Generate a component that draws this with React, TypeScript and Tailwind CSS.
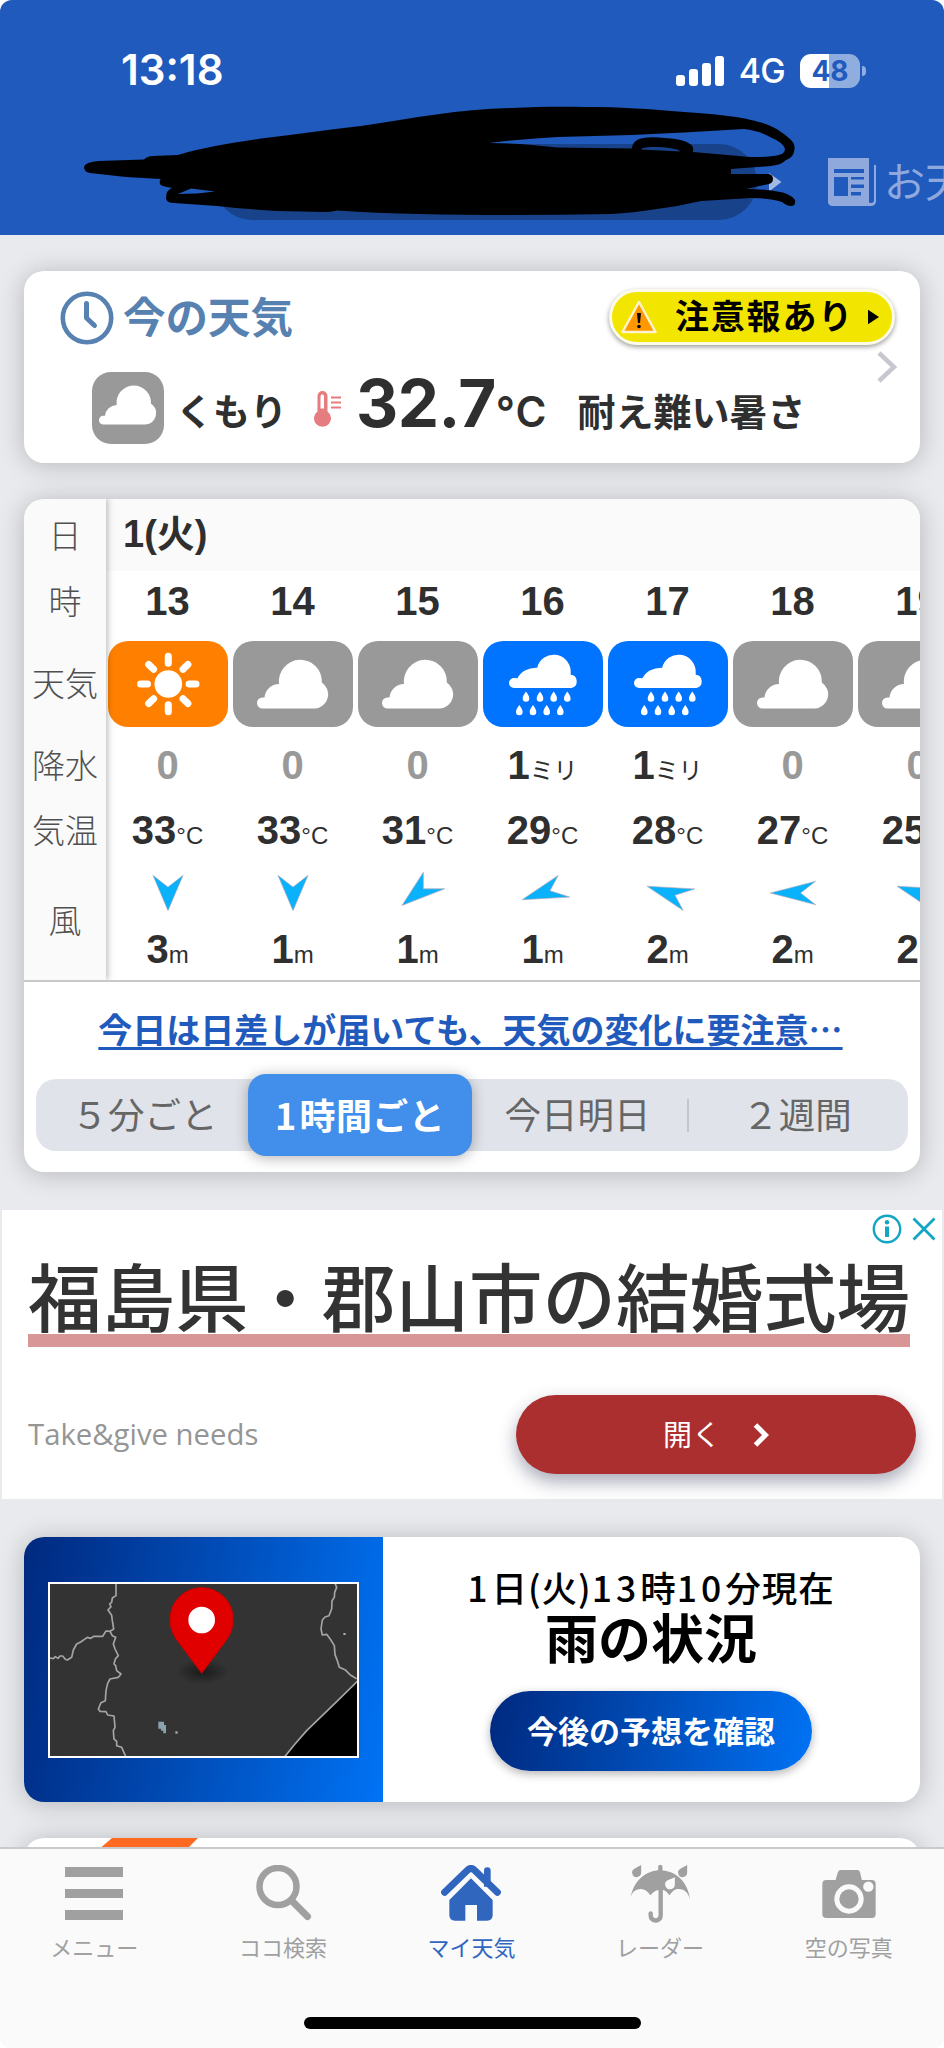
import type { ReactNode } from "react";

type Sky = "sun" | "cloud" | "rain";

type Hour = {
    hour: string;
    sky: Sky;
    rain: number;
    temp: number;
    windAngle: number;
    wind: number;
};

const hours: Hour[] = [
    { hour: "13", sky: "sun", rain: 0, temp: 33, windAngle: 0, wind: 3 },
    { hour: "14", sky: "cloud", rain: 0, temp: 33, windAngle: 0, wind: 1 },
    { hour: "15", sky: "cloud", rain: 0, temp: 31, windAngle: 45, wind: 1 },
    { hour: "16", sky: "rain", rain: 1, temp: 29, windAngle: 67.5, wind: 1 },
    { hour: "17", sky: "rain", rain: 1, temp: 28, windAngle: 112.5, wind: 2 },
    { hour: "18", sky: "cloud", rain: 0, temp: 27, windAngle: 90, wind: 2 },
    { hour: "19", sky: "cloud", rain: 0, temp: 25, windAngle: 112.5, wind: 2 },
];

const CLOUD = "M29.5 67.5A5.5 5.5 0 0 1 29.5 56.5H31.5A15 14.5 0 0 1 46 43A21.5 21.5 0 1 1 88.8 41.5A14.2 14.2 0 0 1 82 67.5Z";
const DROP = "M0 0C2 3 3.3 4.5 3.3 6.9A3.3 3.3 0 0 1 -3.3 6.9C-3.3 4.5 -2 3 0 0Z";

function SkyIcon({ sky }: { sky: Sky }) {
    if (sky === "sun") {
        return (
            <svg viewBox="0 0 120 86" className="block h-[86px] w-[120px] rounded-[20px] bg-[#ff8000]">
                <circle cx="60.3" cy="43" r="13.8" fill="#fff" />
                {[0, 45, 90, 135, 180, 225, 270, 315].map((a) => (
                    <path key={a} d="M60.3 22.2V15.3" stroke="#fff" strokeWidth="7" strokeLinecap="round" transform={`rotate(${a} 60.3 43)`} />
                ))}
            </svg>
        );
    }
    if (sky === "rain") {
        return (
            <svg viewBox="0 0 120 86" className="block h-[86px] w-[120px] rounded-[20px] bg-[#0073ff]">
                <g fill="#fff">
                    <path d="M31 47A5 5 0 0 1 31 37L34.5 37.3A20 17 0 0 1 54.2 26.7A17 17 0 0 1 87.7 29.8V33.8A6.7 6.7 0 0 1 88.5 47Z" />
                    {[43, 57, 70.7, 84.3].map((x) => (
                        <path key={x} d={DROP} transform={`translate(${x} 50.5)`} />
                    ))}
                    {[36.3, 50, 63.7, 77.3].map((x) => (
                        <path key={x} d={DROP} transform={`translate(${x} 64)`} />
                    ))}
                </g>
            </svg>
        );
    }
    return (
        <svg viewBox="0 0 120 86" className="block h-[86px] w-[120px] rounded-[20px] bg-[#999]">
            <path d={CLOUD} fill="#fff" />
        </svg>
    );
}

function WindArrow({ angle }: { angle: number }) {
    return (
        <svg viewBox="-30 -25 60 50" className="block h-[50px] w-[60px]">
            <path d="M0 20L-13.3 -20L0 -6.7L13.3 -20Z" fill="#0ab1fb" stroke="#b9a9b4" strokeWidth="0.6" transform={`scale(1.134 .882) rotate(${angle})`} />
        </svg>
    );
}

function Header() {
    return (
        <header className="relative h-[235px] shrink-0 bg-[#1f5abc]">
            {/* Status bar */}
            <div className="flex h-[106px] items-end justify-between pr-[78px] pb-[17px] pl-[121px] font-['Inter',sans-serif] text-white">
                <span className="text-[42px] leading-[38px] font-semibold">13:18</span>
                <div className="flex items-center">
                    <div className="mr-[15px] flex h-[30px] items-end gap-[4.6px]">
                        <span className="h-[11px] w-[8.5px] rounded-[3px] bg-white" />
                        <span className="h-[17px] w-[8.5px] rounded-[3px] bg-white" />
                        <span className="h-[23px] w-[8.5px] rounded-[3px] bg-white" />
                        <span className="h-[30px] w-[8.5px] rounded-[3px] bg-white" />
                    </div>
                    <span className="mr-[15px] text-[34px] leading-[36px] font-medium tracking-[-0.8px]">4G</span>
                    <span className="flex h-[34px] w-[60px] items-center justify-center rounded-[11px] bg-linear-to-r from-white from-[48%] to-[#8fadde] to-[48%] text-[28px] leading-none font-bold text-[#1f5abc]">48</span>
                    <span className="ml-[2px] h-[10px] w-[4px] rounded-r-full bg-[#8fadde]" />
                </div>
            </div>

            {/* Location tabs, partly covered by the pen stroke */}
            <svg viewBox="0 0 944 235" className="absolute inset-0 h-full w-full">
                <rect x="214" y="144" width="543" height="76" rx="38" fill="#184289" />
                <path d="M769 173L781.500 182L769 191.500Z" fill="#a3b8e4" />
                <path
                    fill="#000"
                    fillRule="evenodd"
                    d="M84 167Q85 162 99 161L144 159.500Q147 156 153 156L178 155C205 147 232 143 265 138C300 134 325 130 361 126C415 118 460 109 512 108C535 107 560 106.500 584 107C620 107 650 109 684 112C712 114 735 116 751 120C765 123 774 127 781 132C791 139 795 143 794.500 148C794.500 155 791 158 786 160C782 164 777 165 771 166L731 169V174H769Q773 175 773 179Q773 183 769 184L746 189Q763 189 777 191.500Q790 193 795 200Q796 206 791 206Q787 206 782 202Q770 198 751 198L701 201Q680 206 657 209Q632 213 611 214Q560 215 507 215C450 215 390 214 337 210.500Q330 212 325 212L277 211Q245 209 217 206L174 203Q166 203 166 198Q166 190 172 188Q160 186 160 184Q159 180 161 179L126 177L90 173Q84 172 84 167ZM191 188.500L215 191.500Q198 194 178 194ZM489 143Q520 139 557 137Q595 136 631 135L684 132.500L744 129Q760 131 770 137Q784 143 785 149Q785 154 777 155.500Q760 158 744 156.500L693 152Q694 146 690 144Q684 139 665 138Q645 136 637 140Q632 143 632 148.500L557 147.500Q520 143 489 143ZM641 149.500Q642 146.500 655 147Q674 147 681 151.500Z"
                />
                <path
                    fill="#8fa9dd"
                    fillRule="evenodd"
                    d="M828 158H869V202Q869 203 871 203Q874 203 874 200V165H876V202Q875 206 871 206H832Q828 205 828 202ZM834 169V173H864V169ZM834 177V196H848V177ZM851 177V179.500H864V177ZM851 184.500V188H864V184.500ZM851 192V195.500H861V192Z"
                />
            </svg>
            <div className="absolute top-[152px] left-[884px] w-[60px] overflow-hidden text-[41px] leading-[54px] whitespace-nowrap text-[#8fa9dd]">お天気</div>
        </header>
    );
}

function NowCard() {
    return (
        <section className="relative mx-6 h-[192px] shrink-0 rounded-[20px] bg-white shadow-[0_2px_26px_rgba(0,0,0,0.22)]">
            <div className="flex h-[94px] items-center justify-between pr-[25px] pl-[36px]">
                <div className="flex items-center gap-[9px] text-[#5681b0]">
                    <svg viewBox="0 0 54 54" className="h-[54px] w-[54px]" fill="none" stroke="currentColor">
                        <circle cx="27" cy="27" r="24.2" strokeWidth="4.6" />
                        <path d="M26.5 12.5V27L34.5 34.5" strokeWidth="5" strokeLinecap="round" strokeLinejoin="round" />
                    </svg>
                    <h2 className="mb-[5px] text-[42.5px] leading-none font-bold">今の天気</h2>
                </div>
                <button className="mb-[3px] flex h-[56px] w-[286px] items-center rounded-full border-[3px] border-[#fdfbe8] bg-[#f2e600] pl-[8px] text-black shadow-[0_2px_5px_rgba(0,0,0,0.4)]">
                    <svg viewBox="0 0 38 36" className="mr-[17px] h-[36px] w-[38px]">
                        <path d="M19 3L35.5 33H2.5Z" fill="#ff9700" stroke="#fff3cf" strokeWidth="2.5" strokeLinejoin="round" />
                        <path d="M17 14H21L20 24H18Z" />
                        <circle cx="19" cy="27.5" r="1.8" />
                    </svg>
                    <span className="mb-[3px] text-[34px] leading-none font-bold tracking-[1.8px]">注意報あり</span>
                    <svg viewBox="0 0 12 16" className="ml-[14px] h-[16px] w-[11px]">
                        <path d="M0 0L12 8L0 16Z" />
                    </svg>
                </button>
            </div>
            <svg viewBox="0 0 22 32" className="absolute top-[80px] right-[22px] h-[32px] w-[22px]" fill="none" stroke="#c7c7cf" strokeWidth="4.5">
                <path d="M3 2L18 16L3 30" />
            </svg>
            <div className="flex h-[86px] items-end pl-[68px] text-[#2f2f2f]">
                <svg viewBox="0 0 72 72" className="mb-[7px] h-[72px] w-[72px] rounded-[19px] bg-[#999]">
                    <path d={CLOUD} fill="#fff" transform="translate(-12.3 -1.6) scale(.803)" />
                </svg>
                <span className="mb-[22px] ml-[12px] text-[37px] leading-none font-bold">くもり</span>
                <svg viewBox="0 0 27 37" className="mb-[23px] ml-[27px] h-[37px] w-[27px]" fill="#e57c80">
                    <path fillRule="evenodd" d="M3.5 5A5 5 0 0 1 13.5 5V20.500A8.500 8.500 0 1 1 3.5 20.500ZM6.500 5V17.500H10V5A1.800 1.800 0 0 0 6.500 5Z" />
                    <path d="M17 5.500H27V7.500H17ZM17 10.500H27V12.500H17ZM17 15.500H27V17.500H17Z" />
                </svg>
                <span className="mb-[14px] ml-[15px] font-['Inter',sans-serif] text-[65.5px] leading-[66px] font-bold tracking-[-0.5px]">32.7</span>
                <span className="mb-[18px] font-['Inter',sans-serif] text-[42px] leading-[42px] font-semibold tracking-[1px]">°C</span>
                <span className="mb-[22px] ml-[30px] text-[38px] leading-none font-bold">耐え難い暑さ</span>
            </div>
        </section>
    );
}

function HourColumn({ data }: { data: Hour }) {
    return (
        <div className="flex w-[125px] shrink-0 flex-col items-center font-['Liberation_Sans','Noto_Sans_CJK_JP',sans-serif] text-[#2f2f2f]">
            <div className="flex h-[64px] w-[120px] items-center justify-center pb-[2px] text-[40px] leading-none font-bold">{data.hour}</div>
            <div className="flex h-[100px] items-center">
                <SkyIcon sky={data.sky} />
            </div>
            {data.rain > 0 ? (
                <div className="flex h-[64px] items-baseline pt-[9px] leading-[44px]">
                    <span className="text-[40px] font-bold">{data.rain}</span>
                    <span className="text-[24px]">ミリ</span>
                </div>
            ) : (
                <div className="h-[64px] pt-[9px] text-[40px] leading-[44px] font-bold text-[#999]">0</div>
            )}
            <div className="flex h-[66px] items-baseline pt-[10px] leading-[44px]">
                <span className="text-[40px] font-bold">{data.temp}</span>
                <span className="text-[24px]">°C</span>
            </div>
            <div className="h-[55px] pt-[4px]">
                <WindArrow angle={data.windAngle} />
            </div>
            <div className="flex h-[61px] items-baseline pt-[8px] leading-[44px]">
                <span className="text-[40px] font-bold">{data.wind}</span>
                <span className="text-[24px]">m</span>
            </div>
        </div>
    );
}

function HourlyCard() {
    return (
        <section className="mx-6 mt-[36px] h-[673px] shrink-0 rounded-[20px] bg-white shadow-[0_2px_26px_rgba(0,0,0,0.22)]">
            <div className="flex h-[483px] overflow-hidden rounded-t-[20px] border-b-2 border-[#c8c8c8]">
                <div className="z-10 flex w-[82px] shrink-0 flex-col bg-[#fafafa] text-center text-[33px] font-light text-[#505050] shadow-[2px_0_6px_rgba(0,0,0,0.25)]">
                    <div className="flex h-[71px] items-center justify-center">日</div>
                    <div className="flex h-[64px] items-center justify-center pb-[2px]">時</div>
                    <div className="flex h-[100px] items-center justify-center pb-[3px]">天気</div>
                    <div className="flex h-[64px] items-center justify-center pb-[3px]">降水</div>
                    <div className="flex h-[66px] items-center justify-center pb-[3px]">気温</div>
                    <div className="flex h-[116px] items-center justify-center pb-[5px]">風</div>
                </div>
                <div className="min-w-0 flex-1">
                    <div className="flex h-[72px] items-center bg-[#fafafa] pb-[2px] pl-[17px] font-['Liberation_Sans','Noto_Sans_CJK_JP',sans-serif] text-[38px] leading-none font-bold text-[#2f2f2f]">
                        1(火)
                    </div>
                    <div className="-mt-px -ml-px flex">
                        {hours.map((h) => (
                            <HourColumn key={h.hour} data={h} />
                        ))}
                    </div>
                </div>
            </div>

            <a className="flex h-[97px] items-center justify-center pr-[3px] pb-[3px] text-[34px] leading-none font-bold whitespace-nowrap text-[#1f5abc] underline decoration-[2.5px] underline-offset-[4px]">
                今日は日差しが届いても、天気の変化に要注意…
            </a>

            <div className="mx-[12px] grid h-[72px] grid-cols-[212px_224px_215px_1fr] grid-rows-[72px] items-center rounded-[20px] bg-[#e0e3ea] text-[36.5px] leading-none text-[#666]">
                <span className="pb-[2px] pl-[5px] text-center">５分ごと</span>
                <span className="flex h-[82px] items-center justify-center rounded-[18px] bg-[#418eeb] pb-[2px] text-[36px] font-bold tracking-[0.4px] text-white shadow-[0_2px_14px_rgba(0,0,0,0.3)]">
                    <span className="mr-[3px]">1</span>時間ごと
                </span>
                <span className="pr-[4px] pb-[2px] text-center">今日明日</span>
                <span className="flex h-[33px] items-center justify-center border-l-2 border-[#c3c6cf] pr-[3px] pb-[2px]">２週間</span>
            </div>
        </section>
    );
}

function AdBanner() {
    return (
        <section className="relative mx-[2px] mt-[38px] h-[289px] shrink-0 bg-white pt-[42px] pr-[26px] pl-[26px]">
            <div className="absolute top-[4px] right-[6px] flex items-center gap-[10px] text-[#12a5c4]">
                <svg viewBox="0 0 30 30" className="h-[30px] w-[30px]" fill="none" stroke="currentColor">
                    <circle cx="15" cy="15" r="13.2" strokeWidth="2.4" />
                    <path d="M15 12.500V23" strokeWidth="4" />
                    <circle cx="15" cy="8.300" r="2.200" fill="currentColor" stroke="none" />
                </svg>
                <svg viewBox="0 0 24 24" className="h-[24px] w-[24px]" fill="none" stroke="currentColor" strokeWidth="2.8">
                    <path d="M1.500 1.500L22.500 22.500M22.500 1.500L1.500 22.500" />
                </svg>
            </div>
            <h2 className="h-[95px] w-[882px] border-b-[13px] border-[#d89696] text-[73.5px] leading-[84px] font-medium whitespace-nowrap text-[#333]">福島県・郡山市の結婚式場</h2>
            <div className="mt-[48px] flex items-center justify-between">
                <span className="pb-[2px] font-['Open_Sans',sans-serif] text-[29.3px] leading-[40px] text-[#959595]">Take&amp;give needs</span>
                <button className="flex h-[79px] w-[400px] items-center justify-center gap-[32px] rounded-full bg-[#ac2f2f] text-[29px] leading-none text-white shadow-[0_8px_18px_rgba(40,45,80,0.4)]">
                    <span className="pb-[2px]">開く</span>
                    <svg viewBox="0 0 16 24" className="h-[24px] w-[16px]" fill="none" stroke="currentColor" strokeWidth="5">
                        <path d="M2.500 2L12.500 12L2.500 22" />
                    </svg>
                </button>
            </div>
        </section>
    );
}

function RadarMap() {
    return (
        <svg viewBox="150 190 921 516" preserveAspectRatio="none" className="h-[176px] w-[311px] border-2 border-white bg-[#333]">
            <defs>
                <radialGradient id="pinShadow">
                    <stop offset="0" stopColor="#1a1a1a" />
                    <stop offset="1" stopColor="#333" />
                </radialGradient>
            </defs>
            <path d="M1072 482L1010 543L920 630L885 670L855 707H1072Z" fill="#000" />
            <g fill="none" stroke="#a5a5a5" strokeWidth="5" strokeLinejoin="round">
                <path d="M1072 482L1010 543L920 630L885 670L855 707" />
                <path d="M348 188V225L337 232L335 245L329 250L333 258L324 268L335 284L337 300L341 325L330 332L337 345L347 350L340 370L345 385L355 405L346 415L342 430L347 435L350 450L363 460L355 470L330 475L323 488L318 510L316 540L303 546L295 565L300 572L318 573L323 583L342 586L345 620L340 630L342 655L350 662V675L365 680L377 707" />
                <path d="M150 412L160 414L166 408L174 413L180 406L188 406L196 416L202 418L215 410L220 388L230 370L242 364L262 350L272 353L282 347L308 347L318 331L332 332" />
                <path d="M1005 188L1010 200L1004 215L1003 230L996 240L995 265L987 285L975 289L967 298L963 325L967 343L980 341L990 354L1003 375L1005 402L1012 420L1018 440L1035 447L1050 462L1070 474" />
            </g>
            <path d="M475 603H492V613H498V638H490V630H483V624H475Z" fill="#89a4ae" />
            <rect x="526" y="632" width="7" height="7" fill="#aaa" />
            <rect x="1030" y="337" width="7" height="6" fill="#aaa" />
            <ellipse cx="607" cy="453" rx="78" ry="38" fill="url(#pinShadow)" />
            <path d="M605 458L532 360C518 341 510 320 510 296A95 95 0 0 1 700 296C700 320 692 341 678 360Z" fill="#e00000" stroke="#c80000" strokeWidth="3" />
            <circle cx="605" cy="298" r="40" fill="#fff" />
        </svg>
    );
}

function RainCard() {
    return (
        <section className="mx-6 mt-[38px] flex h-[265px] shrink-0 overflow-hidden rounded-[20px] bg-white shadow-[0_2px_26px_rgba(0,0,0,0.22)]">
            <div className="flex w-[359px] items-center justify-center bg-linear-100 from-[#00297f] to-[#0073f5] pr-px">
                <RadarMap />
            </div>
            <div className="flex flex-1 flex-col items-center pt-[31px] pr-px font-medium text-black">
                <p className="text-[35.5px] leading-[38px] tracking-[1px]">
                    <span className="tracking-[4px]">1</span>日(火)<span className="tracking-[4px]">13</span>時<span className="tracking-[4px]">10</span>分現在
                </p>
                <p className="mt-[2px] text-[53px] leading-[56px] font-bold">雨の状況</p>
                <button className="mt-[27px] flex h-[80px] w-[322px] items-center justify-center rounded-full bg-linear-100 from-[#00297f] to-[#0073f5] pb-[3px] text-[31px] leading-none font-bold text-white shadow-[0_3px_10px_rgba(0,0,0,0.3)]">
                    今後の予想を確認
                </button>
            </div>
        </section>
    );
}

function TabItem({ label, active, children }: { label: string; active?: boolean; children: ReactNode }) {
    return (
        <div className={`flex flex-1 flex-col items-center text-[22px] leading-[28px] ${active ? "text-[#3166bf]" : "text-[#a0a0a0]"}`}>
            <div className="flex h-[83px] items-start pt-[16px]">{children}</div>
            {label}
        </div>
    );
}

function TabBar() {
    return (
        <nav className="z-10 flex h-[201px] shrink-0 flex-col items-center justify-between border-t-2 border-[#c9c9cc] bg-[#fafafa] pb-[19px]">
            <div className="flex w-full pr-px">
                <TabItem label="メニュー">
                    <div className="mt-[2px] flex flex-col gap-[12px]">
                        <span className="h-[9.5px] w-[58px] bg-current" />
                        <span className="h-[9.5px] w-[58px] bg-current" />
                        <span className="h-[9.5px] w-[58px] bg-current" />
                    </div>
                </TabItem>
                <TabItem label="ココ検索">
                    <svg viewBox="0 0 58 58" className="h-[58px] w-[58px]" fill="none" stroke="currentColor" strokeWidth="6.5">
                        <circle cx="24" cy="21.500" r="18.500" />
                        <path d="M37.500 35.500L53.500 51.500" strokeWidth="7" strokeLinecap="round" />
                    </svg>
                </TabItem>
                <TabItem label="マイ天気" active>
                    <svg viewBox="68 45 180 174" className="h-[58px] w-[60px]" fill="currentColor">
                        <path d="M79 127L148 60Q158 51 168 60L237 127" fill="none" stroke="currentColor" strokeWidth="21" strokeLinecap="round" />
                        <path d="M197 110V62A10 10 0 0 1 217 62V110Z" />
                        <path d="M93 150L158 85L223 150V195Q223 212 206 212H176V165H141V212H110Q93 212 93 195Z" />
                    </svg>
                </TabItem>
                <TabItem label="レーダー">
                    <svg viewBox="630 45 182 180" className="h-[60px] w-[61px]" fill="currentColor">
                        <path d="M631 147C638 92 678 61 720 61C764 61 804 94 810 150C805 126 790 117 775 117C762 117 756 125 748 136C742 128 736 121 728 120V197A21.500 21.500 0 0 1 685 197V190A6 6 0 0 1 698 190V196A8.500 8.500 0 0 0 715 196V120C706 120 698 128 691 136C683 124 674 117 662 117C645 117 633 128 631 147Z" />
                        <path d="M714 66V51A6.500 6.500 0 0 1 727 51V66Z" />
                        <path d="M663 45V67A13.500 13.500 0 1 1 643 56C650 52 657 48 663 45Z" />
                        <path d="M801 45V67A13.500 13.500 0 1 1 781 56C788 52 795 48 801 45Z" />
                        <path d="M764 82V103A14.500 14.500 0 1 1 742 91C750 88 758 85 764 82Z" fill="#fafafa" />
                    </svg>
                </TabItem>
                <TabItem label="空の写真">
                    <svg viewBox="1203 45 160 174" className="h-[58px] w-[54px]" fill="currentColor">
                        <rect x="1203" y="90" width="160" height="114" rx="12" />
                        <path d="M1242 92L1250 66Q1252 60 1258 60H1308Q1314 60 1316 66L1322 92Z" />
                        <circle cx="1283" cy="147" r="44" fill="#fafafa" />
                        <circle cx="1283" cy="147" r="29" />
                        <circle cx="1341" cy="110" r="15.500" fill="#fafafa" />
                    </svg>
                </TabItem>
            </div>
            <div className="h-[12px] w-[337px] rounded-full bg-black" />
        </nav>
    );
}

export default function App() {
    return (
        <div lang="ja" className="bg-white">
            <div className="flex h-[2048px] w-[944px] flex-col overflow-hidden rounded-[12px] bg-[#e9eaee] font-['Noto_Sans_CJK_JP',sans-serif]">
                <Header />
                <main className="flex min-h-0 flex-1 flex-col overflow-hidden pt-[36px]">
                    <NowCard />
                    <HourlyCard />
                    <AdBanner />
                    <RainCard />
                    <section className="mx-6 mt-[36px] h-[60px] shrink-0 rounded-[20px] bg-white pl-[74px] shadow-[0_2px_26px_rgba(0,0,0,0.22)]">
                        <svg viewBox="0 0 102 12" className="h-[12px] w-[102px]">
                            <path d="M14 0H100L88 12H0Z" fill="#ff6a22" />
                        </svg>
                    </section>
                </main>
                <TabBar />
            </div>
        </div>
    );
}
